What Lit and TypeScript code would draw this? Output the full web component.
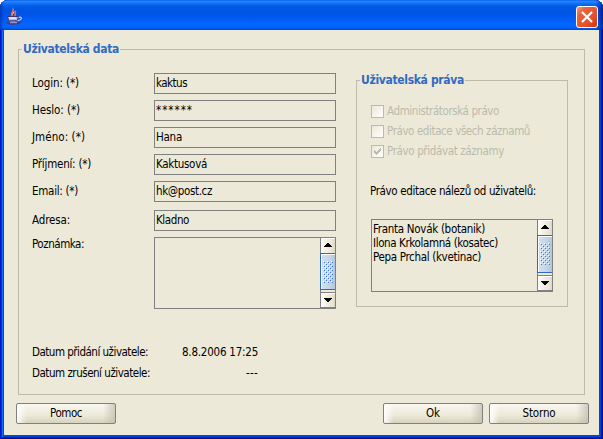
import { LitElement, html, css, svg } from "lit";
import { customElement, property } from "lit/decorators.js";

/** One line of UI text whose tracking is adjusted to a fixed advance width. */
@customElement("ui-text")
class UiText extends LitElement {
  @property() text = "";
  @property({ type: Number }) w = 0;
  static styles = css`
    :host { display: block; flex: none; height: 14px; line-height: 12px; white-space: pre; }
    .run { display: inline-block; height: 12px; vertical-align: top; }
  `;
  updated() {
    const run = this.renderRoot.querySelector(".run") as HTMLElement;
    run.style.letterSpacing = "0px";
    const natural = run.getBoundingClientRect().width;
    if (this.w && this.text.length) {
      run.style.letterSpacing = (this.w - natural) / this.text.length + "px";
    }
  }
  render() {
    return html`<span class="run">${this.text}</span>`;
  }
}

@customElement("scroll-bar")
class ScrollBar extends LitElement {
  static styles = css`
    :host { display: flex; flex-direction: column; width: 15px; flex: none; border-left: 1px solid #808080; box-sizing: border-box; background: #ece9d8; }
    .btn { height: 15px; flex: none; background: linear-gradient(90deg, #fff 0, #f5f3ea 30%, #e6e3d0 85%, #d8d5c2 100%); box-shadow: inset 1px 1px #fff; }
    .btn.down { border-top: 1px solid #808080; border-bottom: 1px solid #808080; box-sizing: border-box; height: 16px; }
    .thumb { flex: 1; margin-left: -1px; margin-bottom: 2px; border: 1px solid #316ac5; border-right: 0; background: linear-gradient(90deg, #d3e2f1, #c4d5e7 60%, #b4c6db); box-shadow: inset 1px 1px #fff; display: flex; align-items: center; justify-content: center; }
    svg { display: block; shape-rendering: crispEdges; }
  `;
  render() {
    const dots = [];
    for (let r = 0; r < 11; r++) {
      for (let x = (r % 2) * 2; x < 10; x += 4) {
        dots.push(svg`<rect x=${x} y=${r * 2} width="1" height="1" fill="#fff"/><rect x=${x + 1} y=${r * 2 + 1} width="1" height="1" fill="#3f78cf"/>`);
      }
    }
    return html`
      <div class="btn"><svg width="14" height="15"><path d="M6 5h2v1h1v1h1v1h1v1H3V8h1V7h1V6h1z"/></svg></div>
      <div class="thumb"><svg width="11" height="22">${dots}</svg></div>
      <div class="btn down"><svg width="14" height="14"><path d="M3 5h8v1h-1v1h-1v1h-1v1H6V8H5V7H4V6H3z"/></svg></div>
    `;
  }
}

@customElement("app-root")
class AppRoot extends LitElement {
  static styles = css`
    :host { display: block; width: 603px; height: 439px; background: #fff; font: 11.5px/14px "DejaVu Sans Condensed", "DejaVu Sans", "Liberation Sans", sans-serif; color: #000; overflow: hidden; }
    * { box-sizing: border-box; }
    .window { width: 603px; height: 439px; display: flex; flex-direction: column; border-radius: 8px 8px 0 0; overflow: hidden; background: #0046e0; box-shadow: inset 1px 0 #0019cf, inset -1px 0 #00138c, inset 0 -1px #00138c, inset 2px 0 #0831d9, inset -2px 0 #001ea0, inset 0 -2px #001ea0, inset 3px 0 #166aee, inset -3px 0 #0441d8; padding: 0 4px 4px; }
    .bar { flex: none; height: 30px; margin: 0 -4px; padding: 3px 5px 0 6px; display: flex; justify-content: space-between; align-items: center;
      background: linear-gradient(90deg, rgba(0,25,150,.5) 0, transparent 4px, transparent 596px, rgba(0,20,130,.8) 603px), linear-gradient(#0058e6 0, #2a83ff 1px, #2080fa 2px, #0d6cf4 4px, #025fe8 6px, #0057e5 8px, #0054e3 12px, #0056eb 16px, #005df8 20px, #0266fe 24px, #0267ff 26px, #0060fa 28px, #0044cf 30px); }
    .bar svg { display: block; }
    .close { width: 22px; height: 22px; border: 1px solid #fff; border-radius: 3px; background: linear-gradient(135deg, #f09a7c 0, #e8623c 25%, #e5512a 65%, #cc3a10 100%); display: flex; align-items: center; justify-content: center; }
    .content { flex: 1; background: #ece9d8; padding: 19px 10px 0 12px; display: flex; flex-direction: column; }
    .group { border: 1px solid #bbbbab; display: flex; flex-direction: column; }
    .group .legend { align-self: flex-start; margin: -8px 0 0 3px; padding: 1px 1px 0; height: 14px; background: #ece9d8; color: #316ac5; font-weight: bold; font-size: 12px; }
    .outer { height: 346px; width: 567px; margin-left: 2px; }
    .columns { display: flex; height: 287px; }
    .form { margin: 17px 0 0 13px; width: 304px; display: flex; flex-direction: column; gap: 6px; }
    .row { display: flex; align-items: center; justify-content: space-between; height: 21px; flex: none; }
    .row.apart { margin-top: 2px; }
    .row.area { height: 72px; align-items: flex-start; }
    .row.area ui-text { margin-top: 1px; }
    .field { width: 182px; height: 21px; border: 1px solid #808080; padding: 3px 0 0 1px; }
    .box { width: 182px; height: 72px; border: 1px solid #808080; display: flex; justify-content: space-between; }
    .rights { width: 212px; height: 227px; margin: 24px 0 0 20px; }
    .check { display: flex; align-items: center; height: 20px; margin-left: 14px; gap: 3px; color: #bbbbab; }
    .check ui-text { padding-top: 1px; }
    .check.first { margin-top: 14px; }
    .tick { width: 13px; height: 13px; border: 1px solid #bbbbab; background: linear-gradient(135deg, #ebe8d8, #fff); }
    .tick svg { display: block; }
    .sub { margin: 24px 0 0 13px; }
    .list { height: 73px; margin: 20px 0 0 14px; }
    .items { padding: 3px 0 0 1px; }
    .dates { margin: 3px 0 0 13px; width: 226px; display: flex; flex-direction: column; gap: 7px; }
    .date { display: flex; justify-content: space-between; }
    .buttons { display: flex; gap: 6px; margin-top: 8px; }
    .button { width: 100px; height: 21px; border: 1px solid #808080; border-radius: 2px; display: flex; align-items: center; justify-content: center; background: linear-gradient(90deg, rgba(255,255,255,.9) 0, rgba(255,255,255,0) 10%, rgba(255,255,255,0) 88%, rgba(190,187,170,.7) 100%), linear-gradient(#f8f7f0 0, #ece9d8 60%, #d5d2bf 100%); }
    .push { margin-right: auto; }
  `;

  private fields: [string, number, string, number][] = [
    ["Login: (*)", 47, "kaktus", 31],
    ["Heslo: (*)", 48, "******", 37],
    ["Jméno: (*)", 53, "Hana", 26],
    ["Příjmení: (*)", 59, "Kaktusová", 51],
    ["Email: (*)", 46, "hk@post.cz", 56],
    ["Adresa:", 38, "Kladno", 33],
  ];

  private rights: [string, number, boolean][] = [
    ["Administrátorská právo", 112, false],
    ["Právo editace všech záznamů", 143, false],
    ["Právo přidávat záznamy", 117, true],
  ];

  private users: [string, number][] = [
    ["Franta Novák (botanik)", 112],
    ["Ilona Krkolamná (kosatec)", 125],
    ["Pepa Prchal (kvetinac)", 108],
  ];

  private t(text: string, w: number) {
    return html`<ui-text .text=${text} .w=${w}></ui-text>`;
  }

  render() {
    return html`
      <div class="window">
        <div class="bar">
          <svg width="17" height="17" viewBox="0 0 17 17" fill="none">
            <path d="M6.500 8C3.500 5.500 8.500 4 7 .5M8.500 8C11 6 7.500 5 10 3" stroke="#f0682c" stroke-width="1.700"/>
            <path d="M6.500 6.500L8 3.500" stroke="#ffc9a0"/>
            <path d="M1.500 8.500h11l-1 3.500-2 2H4.500l-2-2z" fill="#b9bce2" stroke="#39327c"/>
            <path d="M3 10h7" stroke="#fff"/>
            <path d="M4 12.500h6" stroke="#5a529c"/>
            <path d="M12.500 9.500c4-1.500 4 2.500-1 3" stroke="#d5cde8" stroke-width="1.200"/>
            <path d="M.5 14c2 2.500 12 2.500 14 0" stroke="#4a3978" stroke-width="1.700"/>
            <path d="M4 14.700h7" stroke="#d8b8c8" stroke-width=".8"/>
          </svg>
          <div class="close"><svg width="12" height="12" viewBox="0 0 12 12"><path d="M1 1l10 10M11 1l-10 10" stroke="#fff" stroke-width="2.200"/></svg></div>
        </div>
        <div class="content">
          <div class="group outer">
            <div class="legend">${this.t("Uživatelská data", 96)}</div>
            <div class="columns">
              <div class="form">
                ${this.fields.map(([l, lw, v, vw], i) => html`
                  <div class="row ${i === 5 ? "apart" : ""}">${this.t(l, lw)}<div class="field">${this.t(v, vw)}</div></div>`)}
                <div class="row area">${this.t("Poznámka:", 52)}<div class="box"><span></span><scroll-bar></scroll-bar></div></div>
              </div>
              <div class="group rights">
                <div class="legend">${this.t("Uživatelská práva", 103)}</div>
                ${this.rights.map(([l, w, on], i) => html`
                  <div class="check ${i === 0 ? "first" : ""}">
                    <div class="tick">${on ? html`<svg width="11" height="11"><path d="M2.500 4v3M3.500 5v3M4.500 6v3M5.500 5v3M6.500 4v3M7.500 3v3M8.500 2v3" stroke="#bbbbab" stroke-width="1"/></svg>` : ""}</div>
                    ${this.t(l, w)}
                  </div>`)}
                <div class="sub">${this.t("Právo editace nálezů od uživatelů:", 166)}</div>
                <div class="box list">
                  <div class="items">${this.users.map(([n, w]) => this.t(n, w))}</div>
                  <scroll-bar></scroll-bar>
                </div>
              </div>
            </div>
            <div class="dates">
              <div class="date">${this.t("Datum přidání uživatele:", 116)}${this.t("8.8.2006 17:25", 76)}</div>
              <div class="date">${this.t("Datum zrušení uživatele:", 118)}${this.t("---", 12)}</div>
            </div>
          </div>
          <div class="buttons">
            <div class="button push">${this.t("Pomoc", 32)}</div>
            <div class="button">${this.t("Ok", 14)}</div>
            <div class="button">${this.t("Storno", 33)}</div>
          </div>
        </div>
      </div>
    `;
  }
}
